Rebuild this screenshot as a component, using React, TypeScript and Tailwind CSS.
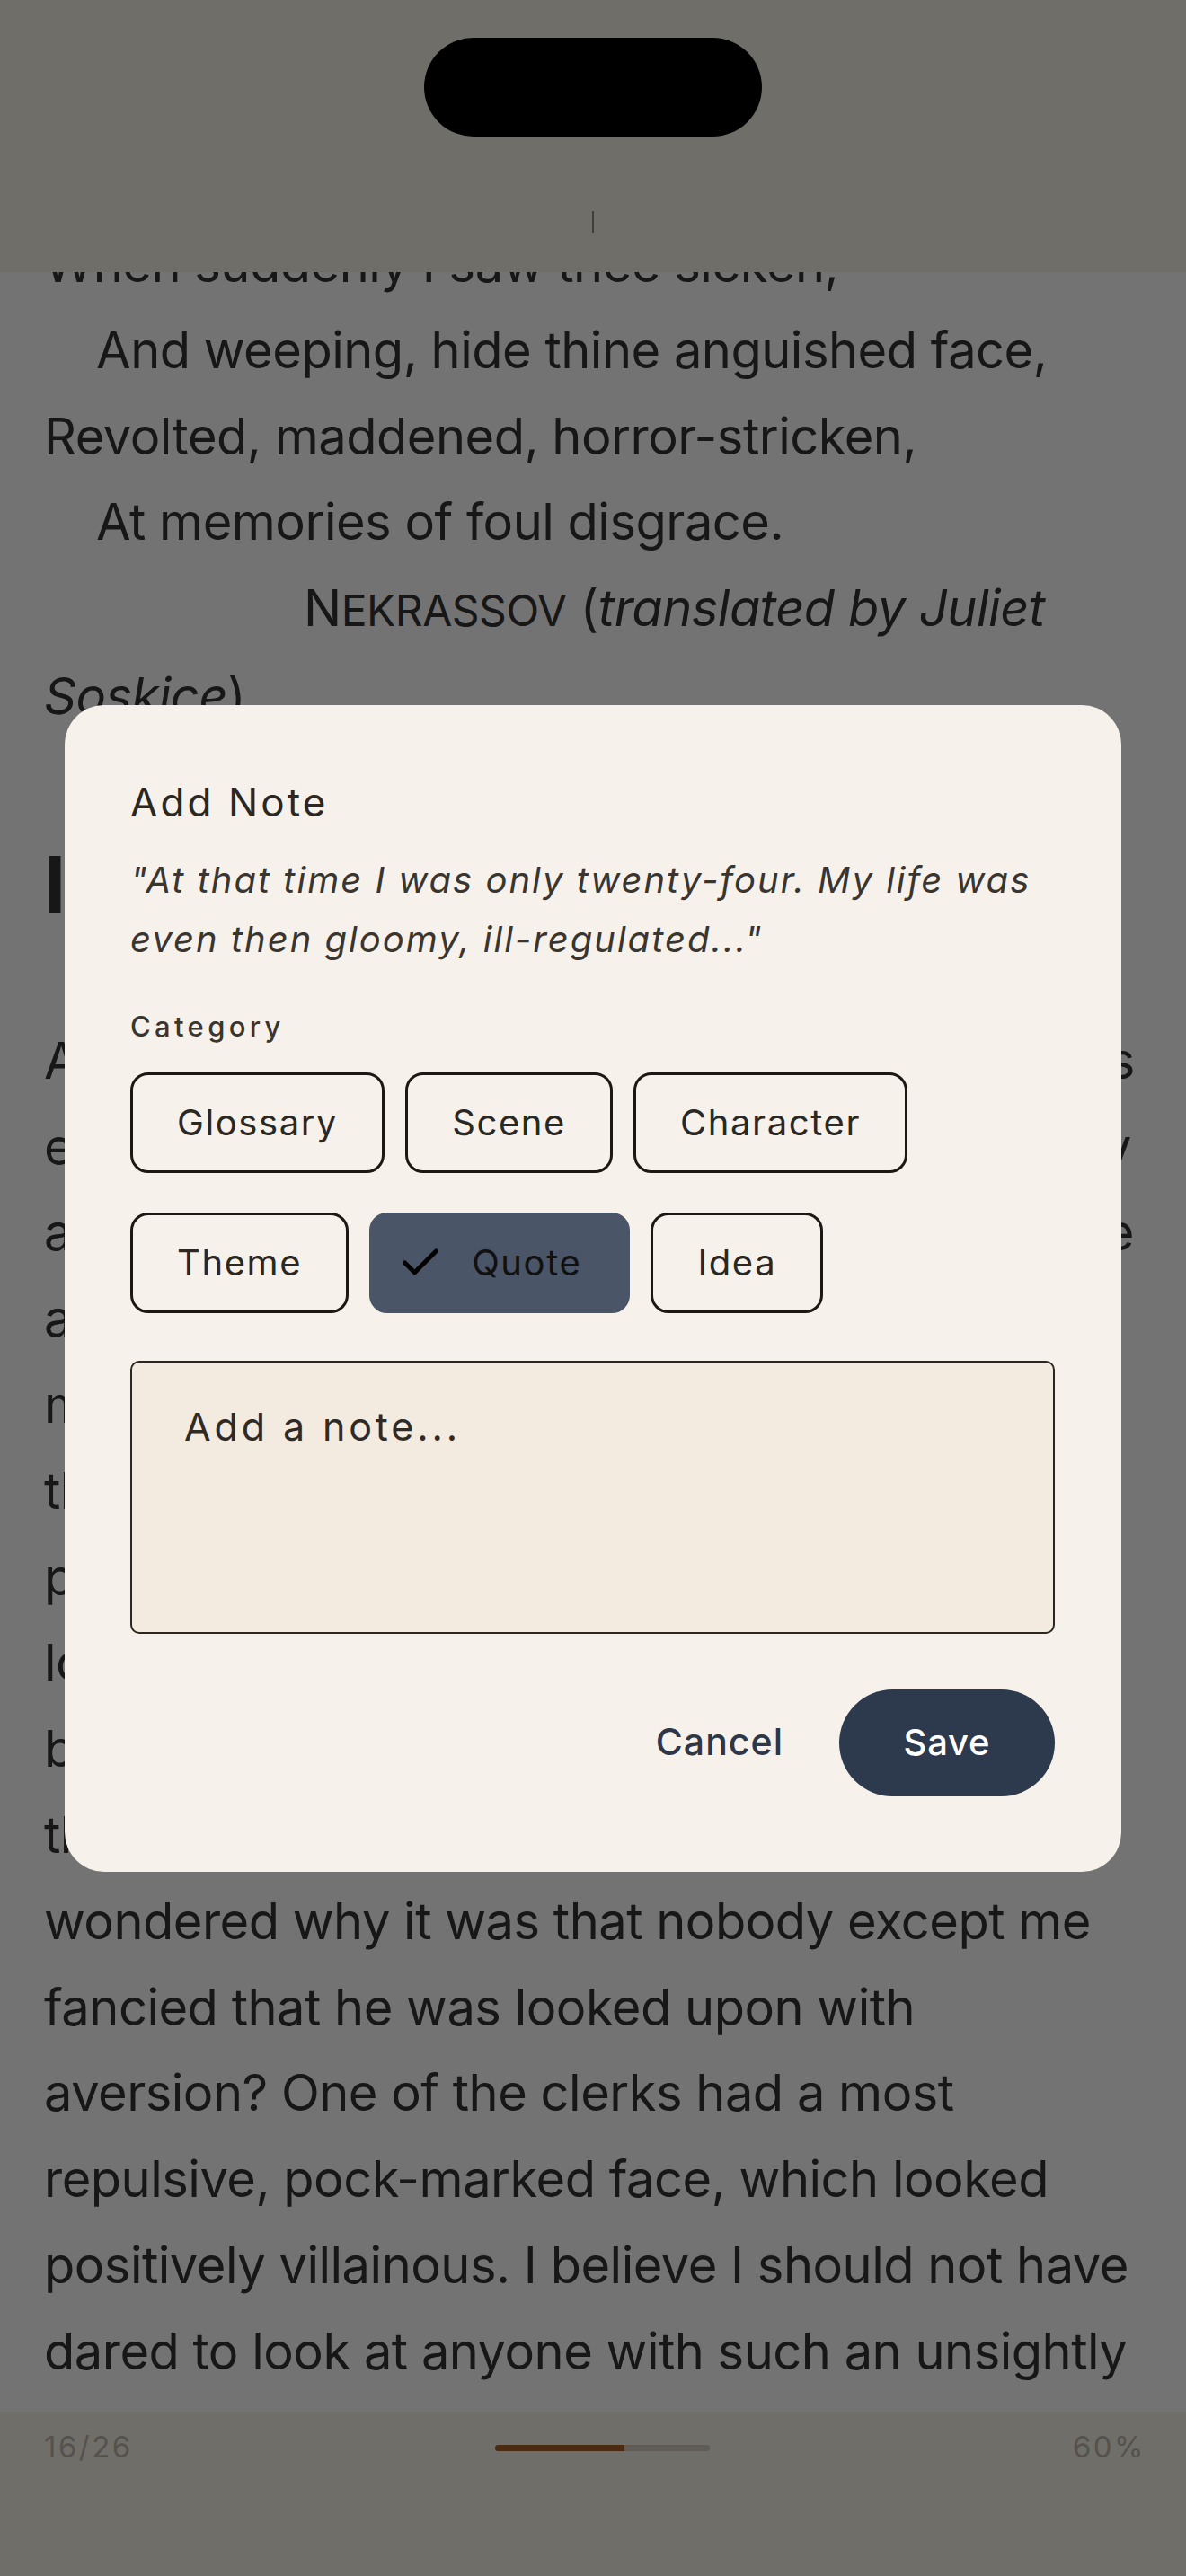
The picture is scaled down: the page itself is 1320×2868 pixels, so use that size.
import React from 'react';
import { Check } from 'lucide-react';

const CATEGORIES = ['Glossary', 'Scene', 'Character', 'Theme', 'Quote', 'Idea'];

const PARAGRAPH =
  'At that time I was only twenty-four. My life was even then gloomy, ill-regulated, and as solitary as that of a savage. I made friends with no one and positively avoided talking, and buried myself more and more in my hole. At work in the office I never looked at anyone, and was perfectly well aware that my companions looked upon me, not only as a queer fellow, but even looked upon me\u2014I always fancied this\u2014with a sort of loathing. I sometimes wondered why it was that nobody except me fancied that he was looked upon with aversion? One of the clerks had a most repulsive, pock-marked face, which looked positively villainous. I believe I should not have dared to look at anyone with such an unsightly countenance.';

const App: React.FC = () => {
  const selected = 'Quote';

  return (
    <div className="relative flex h-[2868px] w-full flex-col overflow-hidden bg-white font-['Inter',sans-serif]">
      {/* Status / top bar */}
      <header className="flex h-[303px] shrink-0 flex-col items-center bg-[#f7f4e9] pt-[42px]">
        <div className="h-[110px] w-[376px] rounded-full bg-black"></div>
        <div className="mt-[83px] h-[24px] w-[2px] bg-[#8c8c8c]"></div>
      </header>

      {/* Reading area */}
      <main className="flex-1 overflow-hidden">
        <div className="-mt-[56px] px-[49px] text-[56px] leading-[95.8px] tracking-[-0.5px] text-[#333333]">
          <p>When suddenly I saw thee sicken,</p>
          <p className="pl-[58px]">And weeping, hide thine anguished face,</p>
          <p>Revolted, maddened, horror-stricken,</p>
          <p className="pl-[58px]">At memories of foul disgrace.</p>
          <p className="indent-[289px]">
            N<span className="text-[48px]">EKRASSOV</span> (<em>translated by Juliet Soskice</em>)
          </p>
          <h2 className="mt-[109px] text-[86px] font-bold leading-[104px]">I</h2>
          <p className="mt-[97px]">{PARAGRAPH}</p>
        </div>
      </main>

      {/* Bottom progress bar */}
      <footer className="h-[183px] shrink-0 bg-[#f7f4e9] pl-[49px] pr-[45px] pt-[20px]">
        <div className="flex h-[40px] items-center justify-between text-[33px] tracking-[0.075em] text-[#bdb6ae]">
          <span>16/26</span>
          <div className="h-[7px] w-[239px] overflow-hidden rounded-full bg-[#d3cac1]">
            <div className="h-full bg-[#a45d24]" style={{ width: '60%' }}></div>
          </div>
          <span>60%</span>
        </div>
      </footer>

      {/* Backdrop + Add Note dialog */}
      <div className="absolute inset-0 flex items-center justify-center bg-[rgba(0,0,0,0.55)] px-[72px]">
        <div className="w-full rounded-[44px] bg-[#f6f2eb] pb-[84px] pl-[73px] pr-[74px] pt-[80px]">
          <h3 className="text-[44px] leading-[56px] tracking-[0.07em] text-[#2b2722]">Add Note</h3>
          <p className="mt-[26px] text-[40px] italic leading-[66px] tracking-[0.05em] text-[#3a352f]">
            "At that time I was only twenty-four. My life was even then gloomy, ill-regulated..."
          </p>

          <label className="mt-[44px] block text-[31px] font-medium leading-[40px] tracking-[0.14em] text-[#3a352f]">
            Category
          </label>
          <div className="mt-[31px] flex flex-wrap gap-x-[23px] gap-y-[44px]">
            {CATEGORIES.map(cat =>
              cat === selected ? (
                <button
                  key={cat}
                  type="button"
                  className="flex h-[112px] items-center gap-[31px] rounded-[20px] border-[3px] border-[#4a5568] bg-[#4a5568] pl-[28px] pr-[51px] text-[40px] tracking-[0.04em] text-[#111111]"
                >
                  <Check size={52} strokeWidth={2.3} className="text-black" />
                  {cat}
                </button>
              ) : (
                <button
                  key={cat}
                  type="button"
                  className="flex h-[112px] items-center rounded-[20px] border-[3px] border-[#1c1915] px-[49px] text-[40px] tracking-[0.04em] text-[#2b2722]"
                >
                  {cat}
                </button>
              )
            )}
          </div>

          <div
            role="textbox"
            className="mt-[53px] h-[304px] rounded-[10px] border-2 border-[#2b2722] bg-[#f3ebe0] pl-[58px] pt-[40px] text-[43px] leading-[63px] tracking-[0.09em] text-[#2f2a25]"
          >
            Add a note...
          </div>

          <div className="mt-[62px] flex items-center justify-end gap-[62px]">
            <button type="button" className="text-[41px] font-medium tracking-[0.025em] text-[#2d3748]">
              Cancel
            </button>
            <button
              type="button"
              className="flex h-[119px] w-[240px] items-center justify-center rounded-full bg-[#2d3a4e] text-[40px] font-medium tracking-[0.02em] text-white"
            >
              Save
            </button>
          </div>
        </div>
      </div>
    </div>
  );
};

export default App;
